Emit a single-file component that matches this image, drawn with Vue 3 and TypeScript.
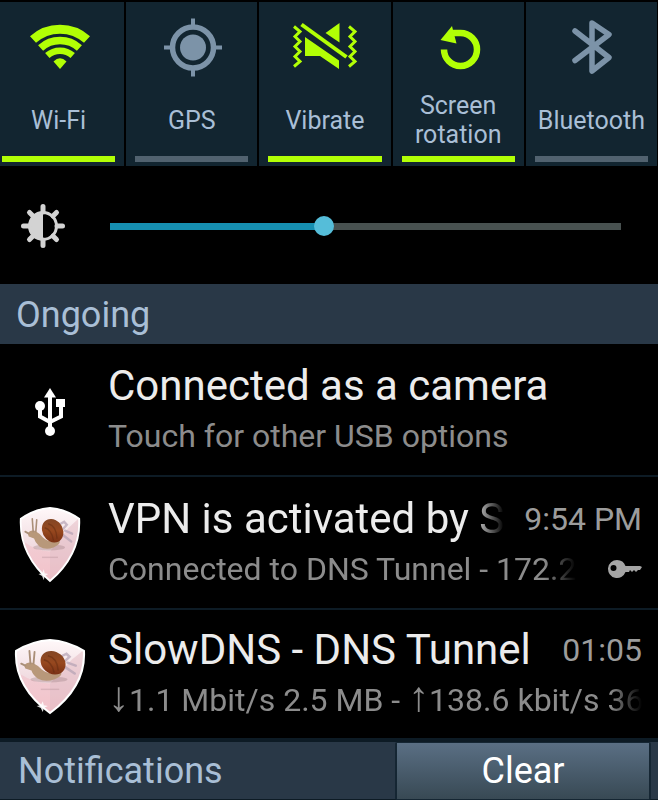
<script setup lang="ts">
import { computed, ref } from 'vue'

interface Toggle {
  id: string
  label: string
  on: boolean
}

interface DetailPart {
  text: string
  arrow?: boolean
}

interface Notice {
  id: string
  icon: 'usb' | 'shield'
  title: string
  detail: DetailPart[]
  time?: string
  fadeTitle?: boolean
  fadeDetail?: boolean
  key?: boolean
}

const toggles = ref<Toggle[]>([
  { id: 'wifi', label: 'Wi-Fi', on: true },
  { id: 'gps', label: 'GPS', on: false },
  { id: 'vibrate', label: 'Vibrate', on: true },
  { id: 'rotation', label: 'Screen rotation', on: true },
  { id: 'bluetooth', label: 'Bluetooth', on: false },
])

const notices: Notice[] = [
  {
    id: 'usb',
    icon: 'usb',
    title: 'Connected as a camera',
    detail: [{ text: 'Touch for other USB options' }],
  },
  {
    id: 'vpn',
    icon: 'shield',
    title: 'VPN is activated by S',
    detail: [{ text: 'Connected to DNS Tunnel - 172.2' }],
    time: '9:54 PM',
    fadeTitle: true,
    fadeDetail: true,
    key: true,
  },
  {
    id: 'dns',
    icon: 'shield',
    title: 'SlowDNS - DNS Tunnel',
    detail: [
      { text: '↓', arrow: true },
      { text: '1.1 Mbit/s 2.5 MB - ' },
      { text: '↑', arrow: true },
      { text: '138.6 kbit/s 36' },
    ],
    time: '01:05',
    fadeDetail: true,
  },
]

const maxBrightness = 255
const brightness = ref(106)
const fill = computed(() => `${(brightness.value / maxBrightness) * 100}%`)
</script>

<template>
  <main class="panel">
    <section class="toggles">
      <button
        v-for="t in toggles"
        :key="t.id"
        type="button"
        class="toggle"
        :class="{ on: t.on }"
        :aria-pressed="t.on"
        @click="t.on = !t.on"
      >
        <svg v-if="t.id === 'wifi'" class="glyph" viewBox="0 0 66 66" fill="none" stroke="currentColor" aria-hidden="true">
          <path d="M7 27.500A40.500 40.500 0 0 1 61 27.500" stroke-width="9" />
          <path d="M14.600 36A29 29 0 0 1 53.400 36" stroke-width="7.500" />
          <path d="M21.300 43.500A19 19 0 0 1 46.700 43.500" stroke-width="6.500" />
          <path d="M27.500 49.500Q34 43 40.500 49.500L34 57Z" fill="currentColor" stroke="none" />
        </svg>
        <svg v-else-if="t.id === 'gps'" class="glyph" viewBox="0 0 66 66" fill="none" stroke="currentColor" aria-hidden="true">
          <circle cx="34" cy="35.500" r="20.500" stroke-width="5.500" />
          <circle cx="34" cy="35.500" r="13" fill="currentColor" stroke="none" />
          <path d="M34 6.500v9M34 55.500v9M5 35.500h9M54 35.500h9" stroke-width="4" />
        </svg>
        <svg v-else-if="t.id === 'vibrate'" class="glyph" viewBox="0 0 66 66" fill="none" stroke="currentColor" aria-hidden="true">
          <path d="M2 14.500l6 5-5 5 5 5-5 5 5 5-5 5 5 5-6 5" stroke-width="3" />
          <path d="M57 14.500l6 5-5 5 5 5-5 5 5 5-5 5 5 5-6 5" stroke-width="3" />
          <path d="M9.500 12.500L54.500 45" stroke-width="4" />
          <path d="M13 25L47 48.500V57L28 44H13Z" fill="currentColor" stroke="none" />
          <path d="M47.500 11V30.500L33.500 21Z" fill="currentColor" stroke="none" />
        </svg>
        <svg v-else-if="t.id === 'rotation'" class="glyph" viewBox="0 0 66 66" fill="none" stroke="currentColor" aria-hidden="true">
          <path d="M19 37.500A16.500 16.500 0 1 0 35.500 21H28" stroke-width="6.500" />
          <path d="M15.500 28L27 14L31.500 31.500Z" fill="currentColor" stroke="none" />
        </svg>
        <svg v-else class="glyph" viewBox="0 0 66 66" fill="none" stroke="currentColor" aria-hidden="true">
          <path d="M17 19L51 45.500L34 59V11L51 22.500L17 48.500" stroke-width="5.500" stroke-linecap="round" stroke-linejoin="round" />
        </svg>
        <span class="toggle-label">{{ t.label }}</span>
        <span class="bar"></span>
      </button>
    </section>

    <section class="brightness">
      <svg class="sun" viewBox="0 0 44 44" fill="none" stroke="#d3d3d3" aria-hidden="true">
        <circle cx="22" cy="22" r="13.500" stroke-width="3" />
        <path d="M22 8A14 14 0 0 0 22 36Z" fill="#d3d3d3" stroke="none" />
        <path
          d="M22 8V2.500M22 36v5.500M8 22H2.500M36 22h5.500M12 12L8.500 8.500M32 12l3.500-3.500M12 32l-3.500 3.500M32 32l3.500 3.500"
          stroke-width="5"
          stroke-linecap="round"
        />
      </svg>
      <input
        v-model.number="brightness"
        type="range"
        min="0"
        :max="maxBrightness"
        aria-label="Brightness"
        :style="{ '--fill': fill }"
      />
    </section>

    <h2 class="heading">Ongoing</h2>

    <ul class="notices">
      <li v-for="n in notices" :key="n.id" class="notice">
        <div class="icon-cell">
          <svg v-if="n.icon === 'usb'" class="usb" viewBox="0 0 32 50" fill="none" stroke="#fff" aria-hidden="true">
            <path d="M16 8v36M6 18v11.500l10 5.500M27 16v13.500l-11 5.500" stroke-width="4" />
            <path d="M16 1L22 10.500H10Z" fill="#fff" stroke="none" />
            <circle cx="6" cy="19" r="5" fill="#fff" stroke="none" />
            <rect x="22" y="12" width="9" height="8" fill="#fff" stroke="none" />
            <circle cx="16" cy="44" r="5" fill="#fff" stroke="none" />
          </svg>
          <svg v-else class="shield" :class="{ wide: n.id === 'dns' }" viewBox="0 0 70 78" preserveAspectRatio="none" aria-hidden="true">
            <defs>
              <linearGradient :id="`skin-${n.id}`" x1="0" y1="0" x2="0" y2="1">
                <stop offset="0" stop-color="#fff8f9" />
                <stop offset="0.5" stop-color="#f1dce1" />
                <stop offset="1" stop-color="#f3ccd2" />
              </linearGradient>
              <linearGradient :id="`shell-${n.id}`" x1="0" y1="0" x2="1" y2="1">
                <stop offset="0" stop-color="#7a4526" />
                <stop offset="0.5" stop-color="#97481f" />
                <stop offset="1" stop-color="#6d2710" />
              </linearGradient>
            </defs>
            <path d="M35 2Q52 3 68 13Q70 49 35 76Q0 49 2 13Q18 3 35 2Z" :fill="`url(#skin-${n.id})`" />
            <path d="M56 22L67 13Q69 47 35 75V46Z" fill="#d9a3ae" opacity="0.35" />
            <path d="M5 36Q20 46 35 46V74Q12 58 5 36Z" fill="#f3b3bd" opacity="0.4" />
            <path d="M35 2Q52 3 68 13Q70 49 35 76Q0 49 2 13Q18 3 35 2Z" fill="none" stroke="#fff" stroke-width="2" />
            <path d="M47 18l4-2 3 3-4 4M49 29l10 7M52 25l8 3" fill="none" stroke="#b3a1b3" stroke-width="2.500" stroke-linecap="round" opacity="0.7" />
            <ellipse cx="34" cy="42" rx="18" ry="3" fill="#8e7275" opacity="0.3" />
            <path d="M10 28Q12 24 18 25Q24 28 27 32Q34 38 46 35Q47 39 39 42Q30 45 23 41Q18 37 17 33L11 31Z" fill="#b8987a" />
            <path d="M16 26L15 13M19 26L20 14M11 28L7 26" fill="none" stroke="#aa8f78" stroke-width="1.800" stroke-linecap="round" />
            <ellipse cx="38" cy="25" rx="13" ry="11" :fill="`url(#shell-${n.id})`" transform="rotate(42 38 25)" />
            <path d="M33 18Q42 20 43 33M29 22Q37 24 39 35" fill="none" stroke="#5c2710" stroke-width="1.500" opacity="0.45" />
            <path d="M26 52h18" stroke="#bf9aa2" stroke-width="1.500" opacity="0.45" />
            <path d="M28 64l1 4 4 1-4 2-1 4-2-4-4-2 4-1Z" fill="#fff" opacity="0.85" />
          </svg>
        </div>
        <div class="body">
          <div class="line">
            <h3 class="title" :class="{ fade: n.fadeTitle }">{{ n.title }}</h3>
            <time v-if="n.time" class="time">{{ n.time }}</time>
          </div>
          <div class="line">
            <p class="detail" :class="{ fade: n.fadeDetail }">
              <span v-for="(part, i) in n.detail" :key="i" :class="{ arrow: part.arrow }">{{ part.text }}</span>
            </p>
            <svg v-if="n.key" class="key" viewBox="0 0 34 20" aria-hidden="true">
              <path
                fill="#a5a5a5"
                fill-rule="evenodd"
                d="M9 1A9 9 0 1 0 17.500 13H21L22 11L24 13L26 11L28 13L30 11H32L34 8L32 7H17.500A9 9 0 0 0 9 1ZM5.500 6A3 3 0 1 1 5.500 12A3 3 0 0 1 5.500 6Z"
              />
            </svg>
          </div>
        </div>
      </li>
    </ul>

    <footer class="footer">
      <h2 class="footer-title">Notifications</h2>
      <button type="button" class="clear">Clear</button>
    </footer>
  </main>
</template>

<style>
body {
  margin: 0;
  background: #000;
}
</style>

<style scoped>
.panel {
  background: #000;
  font-family: Roboto, "Liberation Sans", sans-serif;
  color: #ececec;
  overflow: hidden;
}

.toggles {
  display: grid;
  grid-template-columns: 124fr repeat(4, 131fr);
  gap: 2px;
  padding: 2px 1px 0 0;
}

.toggle {
  display: flex;
  flex-direction: column;
  align-items: center;
  min-width: 0;
  height: 164px;
  padding: 10px 9px 4px;
  border: 0;
  background: #122530;
  font: inherit;
  color: #7c93a8;
}

.toggle:first-child {
  padding-left: 2px;
}

.toggle.on {
  color: #b2ff05;
}

.glyph {
  width: 66px;
  height: 66px;
  flex: none;
}

.toggle-label {
  display: flex;
  flex: 1;
  align-items: center;
  justify-content: center;
  padding-top: 6px;
  font-size: 25px;
  line-height: 29px;
  color: #a9bfd6;
}

.bar {
  flex: none;
  width: 100%;
  height: 6px;
  background: #51626f;
}

.on .bar {
  background: #b2ff05;
}

.brightness {
  display: flex;
  align-items: center;
  gap: 45px;
  box-sizing: border-box;
  height: 118px;
  padding: 2px 37px 0 21px;
}

.sun {
  width: 44px;
  height: 44px;
  flex: none;
}

input[type='range'] {
  flex: 1;
  min-width: 0;
  height: 20px;
  margin: 0;
  appearance: none;
  background: linear-gradient(to right, #168fb1 var(--fill), #485150 var(--fill)) center / 100% 7px no-repeat;
}

input[type='range']::-webkit-slider-thumb {
  appearance: none;
  width: 20px;
  height: 20px;
  border-radius: 50%;
  background: #55bdd9;
}

.heading,
.footer-title {
  margin: 0;
  font-size: 36px;
  font-weight: 400;
  line-height: 58px;
  color: #a9bfd6;
}

.heading {
  padding: 2px 16px 0;
  background: #293847;
}

.notices {
  margin: 0;
  padding: 0;
  list-style: none;
}

.notice {
  display: flex;
  height: 131px;
  border-bottom: 2px solid #0d1b25;
}

.notice:last-child {
  height: 128px;
}

.icon-cell {
  display: flex;
  flex: none;
  align-items: center;
  justify-content: center;
  width: 100px;
  padding-top: 4px;
  box-sizing: border-box;
}

.usb {
  width: 32px;
  height: 50px;
}

.shield {
  width: 62px;
  height: 77px;
}

.shield.wide {
  width: 72px;
}

.body {
  flex: 1;
  min-width: 0;
  padding: 17px 16px 0 8px;
}

.notice:last-child .body {
  padding-top: 15px;
}

.line {
  display: flex;
  align-items: center;
  justify-content: space-between;
  gap: 16px;
  height: 50px;
}

.title,
.detail {
  min-width: 0;
  margin: 0;
  overflow: hidden;
  font-weight: 400;
  white-space: pre;
}

.title {
  font-size: 42px;
  line-height: 52px;
}

.detail,
.time {
  font-size: 32px;
  line-height: 58px;
  color: #8c8c8c;
}

.time {
  flex: none;
  color: #9c9c9c;
}

.arrow {
  font-size: 42px;
  line-height: 32px;
}

.fade {
  mask-image: linear-gradient(to left, transparent, #000 32px);
}

.key {
  flex: none;
  width: 34px;
  height: 20px;
}

.footer {
  display: grid;
  grid-template-columns: 377fr 256fr;
  box-sizing: border-box;
  height: 61px;
  padding: 0 7px 0 18px;
  border-top: 2px solid #0d1b25;
  border-bottom: 2px solid #0d1b25;
  background: #293847;
}

.clear {
  padding: 0;
  border: 1px solid #152633;
  border-width: 1px 2px;
  border-radius: 2px;
  background: linear-gradient(#5a6f84, #384954);
  font: inherit;
  font-size: 36px;
  line-height: 40px;
  color: #fff;
}
</style>
